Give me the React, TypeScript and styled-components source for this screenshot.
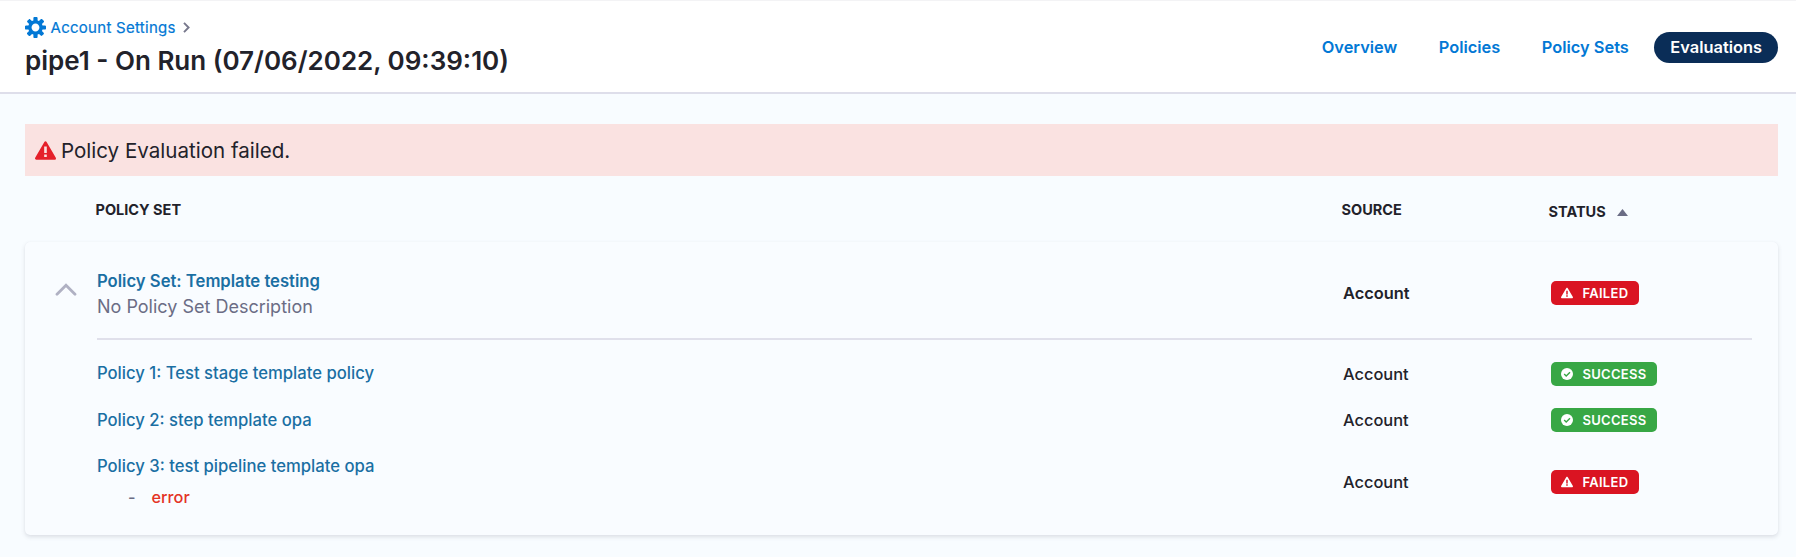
import React from "react";
import styled, { createGlobalStyle } from "styled-components";

const GlobalStyle = createGlobalStyle`
  * { box-sizing: border-box; }
  body { margin: 0; background: #f8fcff; }
`;

const Page = styled.div`
  height: 557px;
  overflow: hidden;
  background: #f8fcff;
  color: #22222a;
  font-family: Inter, "Liberation Sans", sans-serif;
`;

const Header = styled.header`
  display: flex;
  justify-content: space-between;
  height: 94px;
  padding: 0 18px 0 25px;
  background: #fff;
  border-top: 1px solid #f3f3f5;
  border-bottom: 2px solid #dedeea;
`;

const Heading = styled.div`
  padding-top: 15px;
`;

const Breadcrumb = styled.div`
  display: flex;
  align-items: center;
  height: 22px;
  font-size: 15px;
  color: #0278d5;
  -webkit-text-stroke: 0.2px #0278d5;
  svg { display: block; }
`;

const CrumbText = styled.a`
  margin: 1px 7px 0 4.5px;
  letter-spacing: 0.28px;
`;

const Title = styled.h1`
  margin: 5px 0 0;
  font-size: 26px;
  line-height: 35px;
  font-weight: 600;
  white-space: nowrap;
`;

const Nav = styled.nav`
  display: flex;
  align-items: center;
  gap: 9.5px;
  height: 92px;
`;

const NavItem = styled.a<{ $active?: boolean }>`
  height: 31px;
  padding: 0 16px;
  border-radius: 16px;
  font-size: 16.4px;
  line-height: 31px;
  font-weight: 600;
  color: ${(p) => (p.$active ? "#fff" : "#0278d5")};
  background: ${(p) => (p.$active ? "#0a2d57" : "transparent")};
`;

const Content = styled.main`
  padding: 30px 18px 0 25px;
`;

const Banner = styled.div`
  display: flex;
  align-items: center;
  gap: 5px;
  height: 52px;
  padding-left: 10px;
  background: #fae2e1;
  font-size: 20.55px;
`;

const columns = "1246px 207px 1fr";

const TableHead = styled.div`
  display: grid;
  grid-template-columns: ${columns};
  height: 66px;
  padding: 0 26px 0 70.5px;
  font-size: 14.5px;
  line-height: 18px;
  font-weight: 700;
`;

const HeadCell = styled.div<{ $sorted?: boolean }>`
  display: flex;
  align-items: center;
  gap: 11px;
  height: 18px;
  margin-top: ${(p) => (p.$sorted ? 27 : 25)}px;
`;

const Card = styled.section`
  display: flex;
  height: 293px;
  padding-right: 26px;
  border-radius: 5px;
  background: #f9fcff;
  box-shadow: 0 0 1px rgba(40, 41, 61, 0.06), 0 2px 4px rgba(96, 97, 112, 0.18);
`;

const Toggle = styled.div`
  flex: 0 0 72px;
  padding: 41px 0 0 30px;
  svg { display: block; }
`;

const Rows = styled.div`
  flex: 1;
`;

const Row = styled.div<{ $height: number; $header?: boolean }>`
  display: grid;
  grid-template-columns: ${columns};
  align-items: center;
  height: ${(p) => p.$height}px;
  font-size: 16.65px;
  font-weight: ${(p) => (p.$header ? 600 : 500)};
`;

const Summary = styled.div`
  height: 98px;
  padding-top: 25px;
  margin-bottom: 10px;
  border-bottom: 2px solid #e0e0eb;
`;

const PolicyLink = styled.a<{ $strong?: boolean }>`
  display: block;
  line-height: 25px;
  font-weight: ${(p) => (p.$strong ? 600 : 500)};
  color: #1a6fa3;
`;

const Description = styled.div`
  line-height: 25px;
  font-size: 18px;
  font-weight: 400;
  color: #6b6d85;
`;

const SetTitle = styled.div`
  padding-top: 2px;
`;

const Source = styled.span`
  font-size: 16.4px;
`;

const ErrorLine = styled.div`
  display: flex;
  gap: 16px;
  margin-top: 6px;
  padding-left: 31px;
  font-size: 16.3px;
  line-height: 25px;
  color: #6b6d85;
`;

const ErrorText = styled.span`
  color: #e43326;
`;

const Badge = styled.span<{ $ok: boolean }>`
  display: inline-flex;
  align-items: center;
  justify-self: start;
  gap: 10px;
  height: 24px;
  margin-left: 0.5px;
  padding: 0 10.5px 0 10px;
  border-radius: 5px;
  background: ${(p) => (p.$ok ? "#38a745" : "#da1422")};
  color: #fff;
  font-size: 13px;
  font-weight: 600;
  letter-spacing: 0.28px;
`;

const WarningIcon = ({ size, color }: { size: number; color: string }) => (
  <svg width={size} height={size} viewBox="0 0 16 16" fill={color}>
    <path d="M15.84 13.5l.01-.01-7-12-.01.01c-.17-.3-.48-.5-.85-.5s-.67.2-.85.5l-.01-.01-7 12 .01.01c-.09.15-.15.31-.15.5 0 .55.45 1 1 1h14c.55 0 1-.45 1-1 0-.19-.06-.35-.15-.5zm-6.85-.51h-2v-2h2v2zm0-3h-2v-5h2v5z" />
  </svg>
);

const CogIcon = () => (
  <svg width="21" height="21" viewBox="0 0 16 16" fill="#0278d5">
    <path d="M15.19 6.39h-1.85c-.11-.37-.27-.71-.45-1.04l1.36-1.36c.31-.31.31-.82 0-1.13l-1.13-1.13c-.31-.31-.82-.31-1.13 0l-1.36 1.36c-.33-.17-.67-.33-1.04-.44V.79c0-.44-.36-.8-.8-.8h-1.6c-.44 0-.8.36-.8.8v1.86c-.39.12-.75.28-1.1.47l-1.3-1.3c-.3-.3-.79-.3-1.09 0L1.82 2.91c-.3.3-.3.79 0 1.09l1.3 1.3c-.2.34-.36.7-.48 1.09H.79c-.44 0-.8.36-.8.8v1.6c0 .44.36.8.8.8h1.85c.11.37.27.71.45 1.04l-1.36 1.36c-.31.31-.31.82 0 1.13l1.13 1.13c.31.31.82.31 1.13 0l1.36-1.36c.33.18.67.33 1.04.44v1.86c0 .44.36.8.8.8h1.6c.44 0 .8-.36.8-.8v-1.86c.39-.12.75-.28 1.1-.47l1.3 1.3c.3.3.79.3 1.09 0l1.09-1.09c.3-.3.3-.79 0-1.09l-1.3-1.3c.19-.35.36-.71.48-1.1h1.85c.44 0 .8-.36.8-.8v-1.6a.816.816 0 00-.81-.79zm-7.2 4.6c-1.66 0-3-1.34-3-3s1.34-3 3-3 3 1.34 3 3-1.34 3-3 3z" />
  </svg>
);

const TickIcon = () => (
  <svg width="12" height="12" viewBox="0 0 12 12">
    <circle cx="6" cy="6" r="6" fill="#fff" />
    <path d="M3.2 6.1l2 1.9 3.8-3.7" fill="none" stroke="#38a745" strokeWidth="1.4" />
  </svg>
);

const Status = ({ ok }: { ok: boolean }) => (
  <Badge $ok={ok}>
    {ok ? <TickIcon /> : <WarningIcon size={12} color="#fff" />}
    {ok ? "SUCCESS" : "FAILED"}
  </Badge>
);

const policies = [
  { name: "Policy 1: Test stage template policy", ok: true, height: 47 },
  { name: "Policy 2: step template opa", ok: true, height: 46 },
  { name: "Policy 3: test pipeline template opa", ok: false, height: 77, error: "error" },
];

export default function App() {
  return (
    <Page>
      <GlobalStyle />
      <Header>
        <Heading>
          <Breadcrumb>
            <CogIcon />
            <CrumbText>Account Settings</CrumbText>
            <svg width="7" height="11" viewBox="0 0 7 11" fill="none" stroke="#77788c" strokeWidth="1.9">
              <path d="M1 .8l4.6 4.7L1 10.2" />
            </svg>
          </Breadcrumb>
          <Title>pipe1 - On Run (07/06/2022, 09:39:10)</Title>
        </Heading>
        <Nav>
          <NavItem>Overview</NavItem>
          <NavItem>Policies</NavItem>
          <NavItem>Policy Sets</NavItem>
          <NavItem $active>Evaluations</NavItem>
        </Nav>
      </Header>
      <Content>
        <Banner>
          <WarningIcon size={21} color="#e5202a" />
          Policy Evaluation failed.
        </Banner>
        <TableHead>
          <HeadCell>POLICY SET</HeadCell>
          <HeadCell>SOURCE</HeadCell>
          <HeadCell $sorted>
            STATUS
            <svg width="11" height="7" viewBox="0 0 11 7" fill="#6b6d85">
              <path d="M5.5 0L11 7H0z" />
            </svg>
          </HeadCell>
        </TableHead>
        <Card>
          <Toggle>
            <svg width="22" height="13" viewBox="0 0 22 13" fill="none" stroke="#b0b1c3" strokeWidth="2.8" strokeLinecap="round">
              <path d="M2 11.2l9-9 9 9" />
            </svg>
          </Toggle>
          <Rows>
            <Summary>
              <Row $height={52} $header>
                <SetTitle>
                  <PolicyLink $strong>Policy Set: Template testing</PolicyLink>
                  <Description>No Policy Set Description</Description>
                </SetTitle>
                <Source>Account</Source>
                <Status ok={false} />
              </Row>
            </Summary>
            {policies.map((p) => (
              <Row key={p.name} $height={p.height}>
                <div>
                  <PolicyLink>{p.name}</PolicyLink>
                  {p.error && (
                    <ErrorLine>
                      <span>-</span>
                      <ErrorText>{p.error}</ErrorText>
                    </ErrorLine>
                  )}
                </div>
                <Source>Account</Source>
                <Status ok={p.ok} />
              </Row>
            ))}
          </Rows>
        </Card>
      </Content>
    </Page>
  );
}
